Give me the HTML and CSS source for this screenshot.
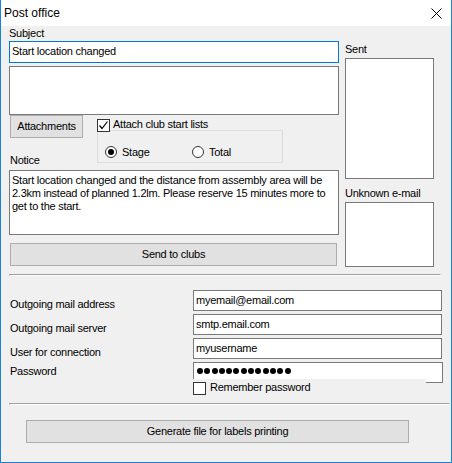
FILE: index.html
```html
<!DOCTYPE html>
<html>
<head>
<meta charset="utf-8">
<link rel="stylesheet" href="styles.css">
</head>
<body>
<div class="win">
  <div class="titlebar">
    <span class="title">Post office</span>
    <svg class="close" width="11" height="11" viewBox="0 0 11 11"><path d="M0.5 0.5 L10.5 10.5 M10.5 0.5 L0.5 10.5" stroke="#000" stroke-width="1" fill="none"/></svg>
  </div>
  <div class="content">
    <div class="top">
      <div class="leftcol">
        <div class="lbl">Subject</div>
        <div class="field subject">Start location changed</div>
        <div class="box body2"></div>
        <div class="midrow">
          <div class="midleft">
            <div class="btn attach">Attachments</div>
            <div class="lbl notice-lbl">Notice</div>
          </div>
          <div class="midright">
            <div class="chkrow">
              <span class="chk"><svg width="11" height="11" viewBox="0 0 11 11"><path d="M1.5 5.5 L4 8.5 L9.5 1.5" stroke="#000" stroke-width="1.2" fill="none"/></svg></span>
              <span class="chklbl">Attach club start lists</span>
            </div>
            <div class="group">
              <div class="radioitem first"><span class="radio on"><span class="dot"></span></span><span class="rlbl">Stage</span></div>
              <div class="radioitem"><span class="radio"></span><span class="rlbl">Total</span></div>
            </div>
          </div>
        </div>
        <div class="box notice">Start location changed and the distance from assembly area will be<br>2.3km instead of planned 1.2lm. Please reserve 15 minutes more to<br>get to the start.</div>
        <div class="btn send">Send to clubs</div>
      </div>
      <div class="rightcol">
        <div class="lbl sent-lbl">Sent</div>
        <div class="box sent"></div>
        <div class="lbl unk-lbl">Unknown e-mail</div>
        <div class="box unk"></div>
      </div>
    </div>
    <div class="sep sep1"></div>
    <div class="form">
      <div class="flbl l1">Outgoing mail address</div>
      <div class="field f">myemail@email.com</div>
      <div class="flbl l1">Outgoing mail server</div>
      <div class="field f">smtp.email.com</div>
      <div class="flbl l3">User for connection</div>
      <div class="field f">myusername</div>
      <div class="flbl l4">Password</div>
      <div class="field f pwd"><span class="dots"><i></i><i></i><i></i><i></i><i></i><i></i><i></i><i></i><i></i><i></i><i></i><i></i><i></i></span></div>
      <div class="spacer"></div>
      <div class="remember">
        <span class="chk empty"></span>
        <span class="rlbl">Remember password</span>
      </div>
    </div>
    <div class="sep sep2"></div>
    <div class="btn gen">Generate file for labels printing</div>
  </div>
</div>
</body>
</html>
```

FILE: styles.css
```css
* { box-sizing: border-box; }
html, body { margin: 0; padding: 0; }
body { font-family: "Liberation Sans", Arial, sans-serif; font-size: 11px; color: #000; background: #fff; }
.win {
  width: 452px; height: 463px;
  border-left: 1px solid #1883d7; border-right: 1px solid #1883d7; border-bottom: 1px solid #1883d7;
  display: flex; flex-direction: column; overflow: hidden;
}
.titlebar {
  height: 26px; background: #fff; display: flex; align-items: flex-start; justify-content: space-between;
}
.title { font-size: 12px; line-height: 26px; padding-left: 3px; }
.close { margin-top: 7.5px; margin-right: 9px; }
.content {
  flex: 1; background: #f0f0f0; padding-left: 8px; padding-top: 1px;
  letter-spacing: -0.25px;
}
.lbl { line-height: 13px; height: 13px; white-space: nowrap; }
.top { display: flex; gap: 6px; }
.leftcol { width: 330px; display: flex; flex-direction: column; }
.field {
  background: #fff; border: 1px solid #7a7a7a; padding-left: 2px; white-space: nowrap; overflow: hidden;
}
.subject { margin-top: 1px; height: 22px; line-height: 19px; border-color: #0078d7; }
.box { background: #fff; border: 1px solid #7a7a7a; }
.body2 { margin-top: 3px; height: 49px; }
.midrow { display: flex; align-items: flex-start; }
.midleft { margin-left: 1px; width: 73px; display: flex; flex-direction: column; }
.btn {
  background: #e1e1e1; border: 1px solid #adadad; text-align: center; line-height: 21px; height: 23px; white-space: nowrap;
}
.attach { width: 73px; }
.notice-lbl { margin-top: 16px; }
.midright { margin-left: 14px; display: flex; flex-direction: column; }
.chkrow { margin-top: 4px; display: flex; align-items: flex-start; height: 13px; position: relative; z-index: 1; }
.chk {
  width: 13px; height: 13px; border: 1px solid #333; background: #fff; display: inline-flex; align-items: center; justify-content: center; flex: none;
}
.chklbl { margin-left: 3px; line-height: 11px; }
.group { margin-top: -2px; width: 186px; height: 33px; border: 1px solid #dcdcdc; display: flex; padding-left: 7px; padding-top: 15px; }
.radioitem { display: flex; align-items: flex-start; }
.radioitem.first { width: 87px; }
.radio {
  width: 12px; height: 12px; border: 1px solid #333; border-radius: 50%; background: #fff; display: inline-flex; align-items: center; justify-content: center; flex: none;
}
.radio .dot { width: 6px; height: 6px; border-radius: 50%; background: #000; }
.rlbl { margin-left: 5px; line-height: 13px; white-space: nowrap; }
.notice { margin-top: 3px; height: 65px; padding: 3px 2px 0; line-height: 13px; white-space: nowrap; overflow: hidden; }
.send { margin-top: 8px; margin-left: 1px; width: 327px; }
.rightcol { width: 89px; display: flex; flex-direction: column; }
.sent-lbl { margin-top: 16px; }
.sent { margin-top: 2px; height: 121px; }
.unk-lbl { margin-top: 8px; }
.unk { margin-top: 2px; height: 65px; }
.sep { height: 2px; border-top: 1px solid #a0a0a0; border-left: 1px solid #a0a0a0; border-bottom: 1px solid #fff; border-right: 1px solid #fff; }
.sep1 { margin-top: 7px; width: 432px; }
.form {
  margin-top: 14px; display: grid; grid-template-columns: 184px 249px; row-gap: 3px; align-items: start;
}
.flbl { padding-left: 1px; line-height: 13px; white-space: nowrap; }
.l1 { margin-top: 8px; }
.l3 { margin-top: 8px; }
.l4 { margin-top: 3px; }
.f { height: 21px; line-height: 19px; }
.pwd { width: 250px; display: flex; align-items: center; padding-left: 3px; }
.dots { display: flex; gap: 1.3px; margin-top: -4px; }
.dots i { display: block; width: 6px; height: 6px; border-radius: 50%; background: #000; }
.spacer { height: 0; }
.remember {
  margin-top: -7px; width: 233px; background: #f0f0f0; position: relative; z-index: 1;
  display: flex; align-items: flex-start; padding-top: 2px; padding-bottom: 2px;
}
.remember .chk { margin-top: 1px; }
.remember .rlbl { margin-left: 4px; }
.sep2 { margin-top: 6px; width: 441px; }
.gen { margin-top: 15px; margin-left: 17px; width: 383px; }
```
